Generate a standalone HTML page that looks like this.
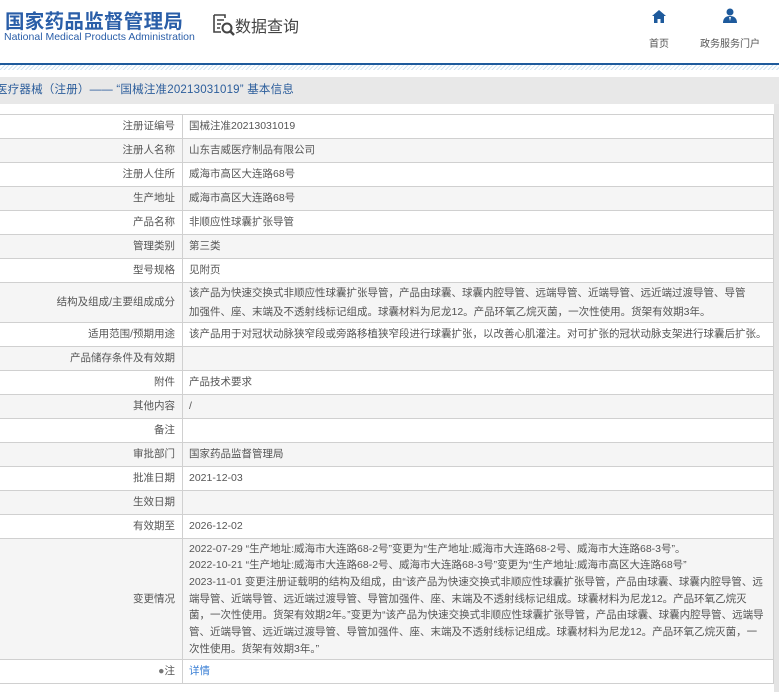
<!DOCTYPE html>
<html><head><meta charset="utf-8"><style>
*{margin:0;padding:0;box-sizing:border-box}
body{width:779px;height:692px;overflow:hidden;background:#fff;font-family:"Liberation Sans","Noto Sans CJK SC",sans-serif;color:#555;position:relative}
.logo{position:absolute;left:5px;top:5px;font-size:19.5px;font-weight:bold;color:#2a5ea8;letter-spacing:0.3px;white-space:nowrap}
.en{position:absolute;left:4px;top:31px;font-size:10.5px;color:#2a5ea8;white-space:nowrap}
.sq{position:absolute;left:235px;top:13px;font-size:16px;color:#444}
.nav{position:absolute;top:35px;font-size:10px;color:#555}
.blue{position:absolute;left:0;top:63px;width:779px;height:2px;background:#1e5a9c}
.hatch{position:absolute;left:0;top:65px;width:779px;height:5px;background:repeating-linear-gradient(135deg,#cfe3f2 0 1px,#fff 1px 3px)}
.bar{position:absolute;left:0;top:77px;width:779px;height:27px;background:#e8e8e8;font-size:11.5px;color:#2b5d9b;line-height:27px;white-space:nowrap;letter-spacing:0.2px}
table{position:absolute;left:-1px;top:114px;width:775px;border-collapse:collapse;font-size:10.5px;table-layout:fixed}
td{border:1px solid #d0d0d0;height:24px;vertical-align:middle;line-height:17px}
td.l{width:183px;text-align:right;padding-right:7px;color:#555}
td.v{padding-left:6px;padding-right:8px;color:#555}
tr:nth-child(even) td{background:#f5f5f5}
.rs{position:absolute;left:774px;top:104px;width:5px;height:588px;background:#e4e4e4}
a{color:#3a7fd5;text-decoration:none}
</style></head><body>
<div class="logo">国家药品监督管理局</div>
<div class="en">National Medical Products Administration</div>
<svg style="position:absolute;left:212px;top:13px" width="24" height="24" viewBox="0 0 24 24"><path d="M2 2h11v3M2 2v17h7M5 7h7M5 11h4M5 15h3" stroke="#444" stroke-width="1.6" fill="none"/><circle cx="15" cy="15" r="4.5" stroke="#444" stroke-width="2" fill="none"/><path d="M18 18l4 4" stroke="#444" stroke-width="2.5"/></svg>
<div class="sq">数据查询</div>
<svg style="position:absolute;left:652px;top:10px" width="14" height="13" viewBox="0 0 14 13"><path d="M7 0L0 6h2v7h3.5V9h3v4H12V6h2z" fill="#1e5a9c"/></svg>
<div class="nav" style="left:649px">首页</div>
<svg style="position:absolute;left:723px;top:8px" width="14" height="15" viewBox="0 0 14 15"><circle cx="7" cy="4" r="3.5" fill="#1e5a9c"/><path d="M0 15c0-5 3-7 7-7s7 2 7 7z" fill="#1e5a9c"/><path d="M6 9l1 4 1-4z" fill="#fff"/></svg>
<div class="nav" style="left:700px">政务服务门户</div>
<div class="blue"></div><div class="hatch"></div>
<div class="bar"><span style="margin-left:-4px">医疗器械（注册）—— “国械注准20213031019” 基本信息</span></div>
<div class="rs"></div>
<table>
<tr><td class="l">注册证编号</td><td class="v">国械注准20213031019</td></tr>
<tr><td class="l">注册人名称</td><td class="v">山东吉威医疗制品有限公司</td></tr>
<tr><td class="l">注册人住所</td><td class="v">威海市高区大连路68号</td></tr>
<tr><td class="l">生产地址</td><td class="v">威海市高区大连路68号</td></tr>
<tr><td class="l">产品名称</td><td class="v">非顺应性球囊扩张导管</td></tr>
<tr><td class="l">管理类别</td><td class="v">第三类</td></tr>
<tr><td class="l">型号规格</td><td class="v">见附页</td></tr>
<tr><td class="l" style="height:40px">结构及组成/主要组成成分</td><td class="v"><div style="line-height:19px;width:565px">该产品为快速交换式非顺应性球囊扩张导管，产品由球囊、球囊内腔导管、远端导管、近端导管、远近端过渡导管、导管加强件、座、末端及不透射线标记组成。球囊材料为尼龙12。产品环氧乙烷灭菌，一次性使用。货架有效期3年。</div></td></tr>
<tr><td class="l">适用范围/预期用途</td><td class="v" style="white-space:nowrap">该产品用于对冠状动脉狭窄段或旁路移植狭窄段进行球囊扩张，以改善心肌灌注。对可扩张的冠状动脉支架进行球囊后扩张。</td></tr>
<tr><td class="l">产品储存条件及有效期</td><td class="v"></td></tr>
<tr><td class="l">附件</td><td class="v">产品技术要求</td></tr>
<tr><td class="l">其他内容</td><td class="v">/</td></tr>
<tr><td class="l">备注</td><td class="v"></td></tr>
<tr><td class="l">审批部门</td><td class="v">国家药品监督管理局</td></tr>
<tr><td class="l">批准日期</td><td class="v">2021-12-03</td></tr>
<tr><td class="l">生效日期</td><td class="v"></td></tr>
<tr><td class="l">有效期至</td><td class="v">2026-12-02</td></tr>
<tr><td class="l" style="height:121px">变更情况</td><td class="v" style="line-height:16.7px">2022-07-29 “生产地址:威海市大连路68-2号”变更为“生产地址:威海市大连路68-2号、威海市大连路68-3号”。<br>2022-10-21 “生产地址:威海市大连路68-2号、威海市大连路68-3号”变更为“生产地址:威海市高区大连路68号”<br>2023-11-01 变更注册证载明的结构及组成，由“该产品为快速交换式非顺应性球囊扩张导管，产品由球囊、球囊内腔导管、远端导管、近端导管、远近端过渡导管、导管加强件、座、末端及不透射线标记组成。球囊材料为尼龙12。产品环氧乙烷灭菌，一次性使用。货架有效期2年。”变更为“该产品为快速交换式非顺应性球囊扩张导管，产品由球囊、球囊内腔导管、远端导管、近端导管、远近端过渡导管、导管加强件、座、末端及不透射线标记组成。球囊材料为尼龙12。产品环氧乙烷灭菌，一次性使用。货架有效期3年。”</td></tr>
<tr><td class="l"><span style="color:#777">●</span>注</td><td class="v"><a>详情</a></td></tr>
</table>
</body></html>
